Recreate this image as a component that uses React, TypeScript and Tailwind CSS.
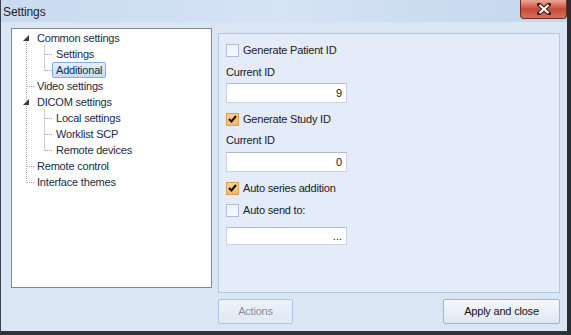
import React from "react";

const font = "font-['Liberation_Sans',Arial,sans-serif]";

function Triangle() {
  return (
    <svg width="6" height="6" viewBox="0 0 6 6" className="shrink-0">
      <polygon points="6,0 6,6 0,6" fill="#3a3a3a" />
    </svg>
  );
}

type TreeItem = { label: string; level: number; expander?: boolean; selected?: boolean };

const treeItems: TreeItem[] = [
  { label: "Common settings", level: 0, expander: true },
  { label: "Settings", level: 1 },
  { label: "Additional", level: 1, selected: true },
  { label: "Video settings", level: 0 },
  { label: "DICOM settings", level: 0, expander: true },
  { label: "Local settings", level: 1 },
  { label: "Worklist SCP", level: 1 },
  { label: "Remote devices", level: 1 },
  { label: "Remote control", level: 0 },
  { label: "Interface themes", level: 0 },
];

function TreeLines() {
  // dotted connectors, coordinates relative to the tree's inner box
  const dot = { stroke: "#a3a3a3", strokeWidth: 1, strokeDasharray: "1 1" };
  const rowY = (i: number) => 9.5 + i * 16;
  return (
    <svg className="absolute left-0 top-0 pointer-events-none" width="199" height="258">
      <line x1="14.5" y1={13} x2="14.5" y2={rowY(9)} {...dot} />
      {[3, 8, 9].map((i) => (
        <line key={i} x1="15" y1={rowY(i)} x2="23" y2={rowY(i)} {...dot} />
      ))}
      <line x1="32.5" y1={rowY(0) + 7} x2="32.5" y2={rowY(2)} {...dot} />
      {[1, 2].map((i) => (
        <line key={i} x1="33" y1={rowY(i)} x2="41" y2={rowY(i)} {...dot} />
      ))}
      <line x1="32.5" y1={rowY(4) + 7} x2="32.5" y2={rowY(7)} {...dot} />
      {[5, 6, 7].map((i) => (
        <line key={i} x1="33" y1={rowY(i)} x2="41" y2={rowY(i)} {...dot} />
      ))}
    </svg>
  );
}

function Tree() {
  return (
    <div className="relative mt-[6px] h-[260px] w-[201px] border border-[#828790] bg-white">
      <TreeLines />
      <div className="relative flex flex-col pt-[1px]">
        {treeItems.map((item) => (
          <div
            key={item.label}
            className={`flex h-[16px] items-center ${item.level === 0 ? "pl-[11px]" : "pl-[40px]"}`}
          >
            {item.level === 0 && (
              <div className="flex w-[6px] items-center">{item.expander && <Triangle />}</div>
            )}
            <span
              className={`whitespace-nowrap rounded-[2px] px-[3px] text-[11px] leading-[14px] tracking-[-0.2px] text-[#1a2b45] ${
                item.level === 0 ? "ml-[4px]" : ""
              } ${item.selected ? "border border-[#84acdd] bg-gradient-to-b from-[#e4f0fd] to-[#c6ddf9]" : "border border-transparent"}`}
            >
              {item.label}
            </span>
          </div>
        ))}
      </div>
    </div>
  );
}

function CheckBox({ checked }: { checked?: boolean }) {
  if (checked) {
    return (
      <div className="flex h-[13px] w-[13px] items-center justify-center border border-[#d9a252] bg-gradient-to-b from-[#fbd08f] to-[#f3b867]">
        <svg width="9" height="8" viewBox="0 0 9 8">
          <path d="M1 4 L3.5 6.5 L8 1" stroke="#111" strokeWidth="2" fill="none" />
        </svg>
      </div>
    );
  }
  return <div className="h-[13px] w-[13px] border border-[#a9c0de] bg-gradient-to-b from-[#edf3fa] to-[#f7fafd]" />;
}

function CheckRow({ label, checked, className }: { label: string; checked?: boolean; className: string }) {
  return (
    <div className={`flex h-[16px] items-center gap-[4px] ${className}`}>
      <CheckBox checked={checked} />
      <span className="text-[11px] tracking-[-0.2px] text-[#202020]">{label}</span>
    </div>
  );
}

function Field({ value, className, height }: { value: string; className: string; height: string }) {
  return (
    <div
      className={`flex w-[121px] items-center justify-end border border-[#c7d4e4] border-t-[#aebbcc] bg-white pr-[4px] text-[11px] text-[#202020] ${height} ${className}`}
    >
      {value}
    </div>
  );
}

function Label({ text, className }: { text: string; className: string }) {
  return (
    <div className={`flex h-[16px] items-center text-[11px] tracking-[-0.2px] text-[#202020] ${className}`}>{text}</div>
  );
}

function CloseButton() {
  return (
    <div className="flex h-[19px] w-[47px] items-center justify-center rounded-b-[4px] border border-t-0 border-[#6b2a24] bg-gradient-to-b from-[#e9a796] via-[#c9493b] to-[#d3705a]">
      <svg width="14" height="12" viewBox="0 0 14 12">
        <path d="M2 1.5 L12 10.5 M12 1.5 L2 10.5" stroke="#3b1b16" strokeWidth="4" strokeLinecap="square" />
        <path d="M2.5 2 L11.5 10 M11.5 2 L2.5 10" stroke="#fff" strokeWidth="2.2" />
      </svg>
    </div>
  );
}

export default function App() {
  return (
    <div
      className={`flex h-[335px] w-[571px] flex-col border-b-[4px] border-l border-r-[4px] border-b-[#2e3136] border-l-[#3d434b] border-r-[#2a2d31] bg-[#dbe6f4] ${font}`}
    >
      <div className="flex h-[22px] items-start justify-between bg-gradient-to-r from-[#c8dbf1] via-[#d5e3f4] to-[#c3d6ee]">
        <span className="pl-[2px] pt-[4px] text-[12px] leading-[16px] tracking-[-0.1px] text-[#1c1c1c]">Settings</span>
        <CloseButton />
      </div>

      <div className="flex flex-1 pl-[10px]">
        <Tree />

        <div className="ml-[6px] mt-[11px] flex w-[342px] flex-col">
          <div className="flex h-[260px] flex-col border border-[#b3c8e3] bg-[#e3ecf8] pl-[7px]">
            <CheckRow label="Generate Patient ID" className="mt-[8px]" />
            <Label text="Current ID" className="mt-[6px]" />
            <Field value="9" className="mt-[3px]" height="h-[20px]" />
            <CheckRow label="Generate Study ID" checked className="mt-[8px]" />
            <Label text="Current ID" className="mt-[5px]" />
            <Field value="0" className="mt-[4px]" height="h-[20px]" />
            <CheckRow label="Auto series addition" checked className="mt-[8px]" />
            <CheckRow label="Auto send to:" className="mt-[6px]" />
            <Field value="..." className="mt-[9px]" height="h-[18px]" />
          </div>

          <div className="mt-[6px] flex h-[25px] justify-between">
            <button className="h-[25px] w-[75px] rounded-[2px] border border-[#adc4e3] bg-gradient-to-b from-[#eef3fa] to-[#dfe8f4] text-[11px] tracking-[-0.2px] text-[#8b8f96]">
              Actions
            </button>
            <button className="h-[25px] w-[117px] rounded-[2px] border border-[#9fb4d0] bg-gradient-to-b from-[#f5f8fc] to-[#dde7f3] text-[11px] tracking-[-0.2px] text-[#111]">
              Apply and close
            </button>
          </div>
        </div>
      </div>
    </div>
  );
}
